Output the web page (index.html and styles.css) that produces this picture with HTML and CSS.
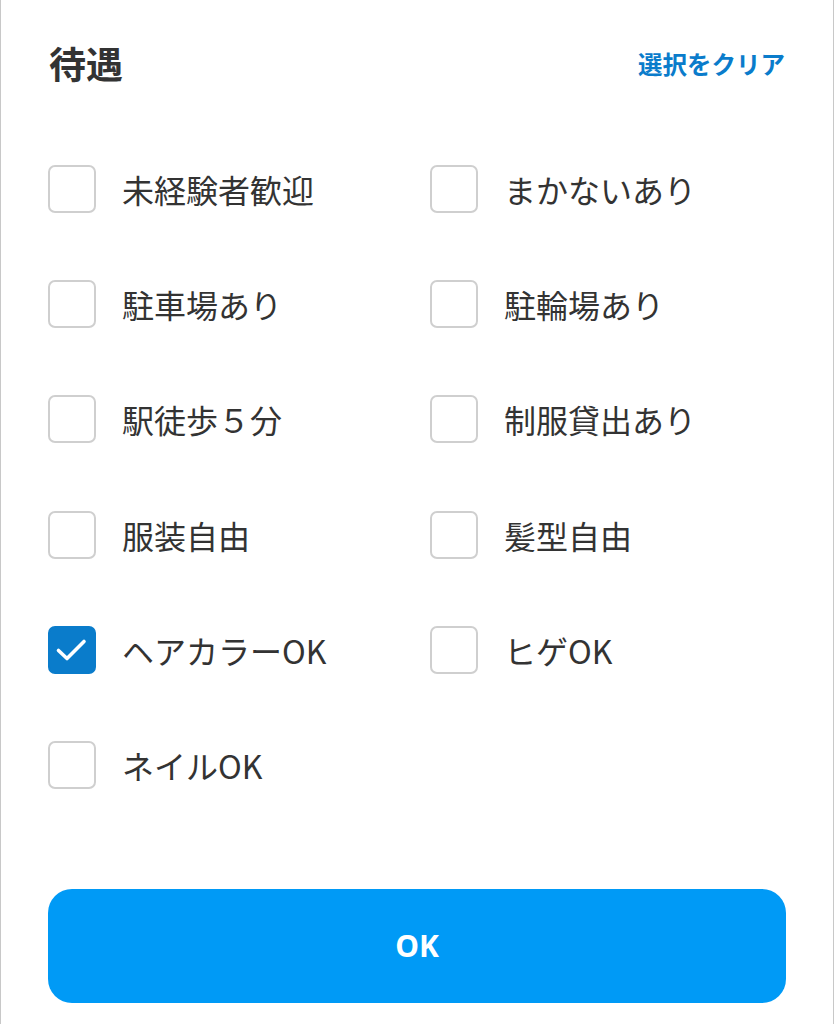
FILE: index.html
```html
<!DOCTYPE html>
<html lang="ja">
<head>
<meta charset="utf-8">
<link rel="stylesheet" href="styles.css">
</head>
<body>
<div class="panel">
  <div class="header">
    <h2 class="title">待遇</h2>
    <a class="clear">選択をクリア</a>
  </div>
  <div class="grid">
    <label class="item"><span class="box"></span><span class="label">未経験者歓迎</span></label>
    <label class="item"><span class="box"></span><span class="label">まかないあり</span></label>
    <label class="item"><span class="box"></span><span class="label">駐車場あり</span></label>
    <label class="item"><span class="box"></span><span class="label">駐輪場あり</span></label>
    <label class="item"><span class="box"></span><span class="label">駅徒歩５分</span></label>
    <label class="item"><span class="box"></span><span class="label">制服貸出あり</span></label>
    <label class="item"><span class="box"></span><span class="label">服装自由</span></label>
    <label class="item"><span class="box"></span><span class="label">髪型自由</span></label>
    <label class="item"><span class="box checked"><svg viewBox="0 0 48 48" width="48" height="48"><path d="M10.5 24.5 L19 32.5 L36 15.5" fill="none" stroke="#fff" stroke-width="3.6" stroke-linecap="round" stroke-linejoin="round"/></svg></span><span class="label">ヘアカラーOK</span></label>
    <label class="item"><span class="box"></span><span class="label">ヒゲOK</span></label>
    <label class="item"><span class="box"></span><span class="label">ネイルOK</span></label>
  </div>
  <button class="ok">OK</button>
</div>
</body>
</html>
```
FILE: styles.css
```css
html, body {
  margin: 0;
  padding: 0;
  background: #fff;
}
body {
  font-family: "Noto Sans CJK JP", "Noto Sans", sans-serif;
  color: #333;
}
.panel {
  box-sizing: border-box;
  width: 834px;
  height: 1024px;
  border-left: 1px solid #c8c8c8;
  border-right: 1px solid #c8c8c8;
  padding: 36px 47px 0 47px;
}
.header {
  height: 54px;
  display: flex;
  align-items: center;
  justify-content: space-between;
}
.title {
  margin: 0 0 0 1px;
  font-size: 37px;
  font-weight: 700;
  line-height: 1;
  color: #333;
}
.clear {
  font-size: 24.5px;
  font-weight: 700;
  color: #0a7ccb;
  line-height: 1;
  margin-right: 1px;
  position: relative;
  top: 1px;
}
.grid {
  margin-top: 75px;
  display: grid;
  grid-template-columns: 382px 1fr;
  row-gap: 67.2px;
}
.item {
  display: flex;
  align-items: center;
  height: 48px;
}
.box {
  box-sizing: border-box;
  width: 48px;
  height: 48px;
  border: 2px solid #cfcfcf;
  border-radius: 7px;
  flex: none;
  position: relative;
}
.box.checked {
  background: #0a7ccb;
  border-color: #0a7ccb;
}
.box.checked svg {
  position: absolute;
  left: -2px;
  top: -2px;
}
.label {
  margin-left: 26px;
  font-size: 32px;
  line-height: 1;
  color: #333;
}
.ok {
  display: block;
  margin-top: 100px;
  width: 100%;
  height: 114px;
  border: none;
  border-radius: 24px;
  background: #009af6;
  color: #fff;
  font-family: "Noto Sans", sans-serif;
  font-size: 30px;
  font-weight: 700;
  padding: 0;
}
```
